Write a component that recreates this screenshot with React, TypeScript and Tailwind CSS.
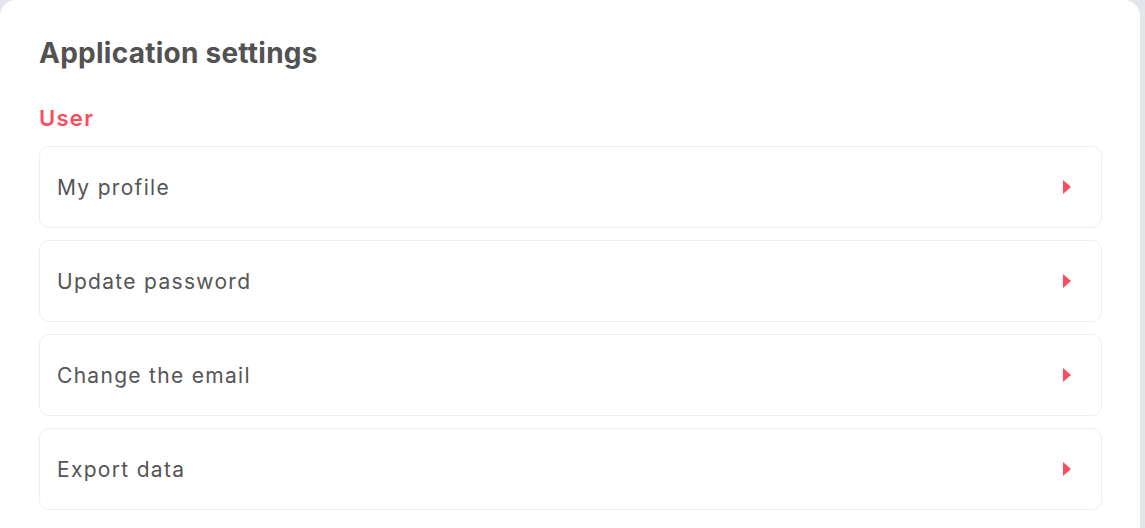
const items = ["My profile", "Update password", "Change the email", "Export data"];

const Caret = () => (
  <svg width="8" height="14" viewBox="0 0 8 14" className="shrink-0">
    <path d="M0 0 L8 7 L0 14 Z" fill="#ff4b5c" />
  </svg>
);

export default function App() {
  return (
    <div className="min-h-screen bg-[#e3e6eb] pr-[5px] font-['Inter',sans-serif]">
      <div className="min-h-[560px] rounded-t-2xl bg-white px-[39px] pt-[35px]">
        <h1 className="text-[28px] font-bold leading-[36px] tracking-[0.25px] text-[#525252]">Application settings</h1>
        <h2 className="mt-[34px] text-[22px] font-semibold leading-[26px] tracking-[1.3px] text-[#ff4b5c]">User</h2>
        <div className="mt-[15px] flex w-[1063px] flex-col gap-[12px]">
          {items.map((label) => (
            <div
              key={label}
              className="flex h-[82px] items-center justify-between rounded-[10px] border border-[#e9eef7] pl-[17px] pr-[30px]"
            >
              <span className="pt-[2px] text-[21px] tracking-[1.3px] text-[#555555]">{label}</span>
              <Caret />
            </div>
          ))}
        </div>
      </div>
    </div>
  );
}
